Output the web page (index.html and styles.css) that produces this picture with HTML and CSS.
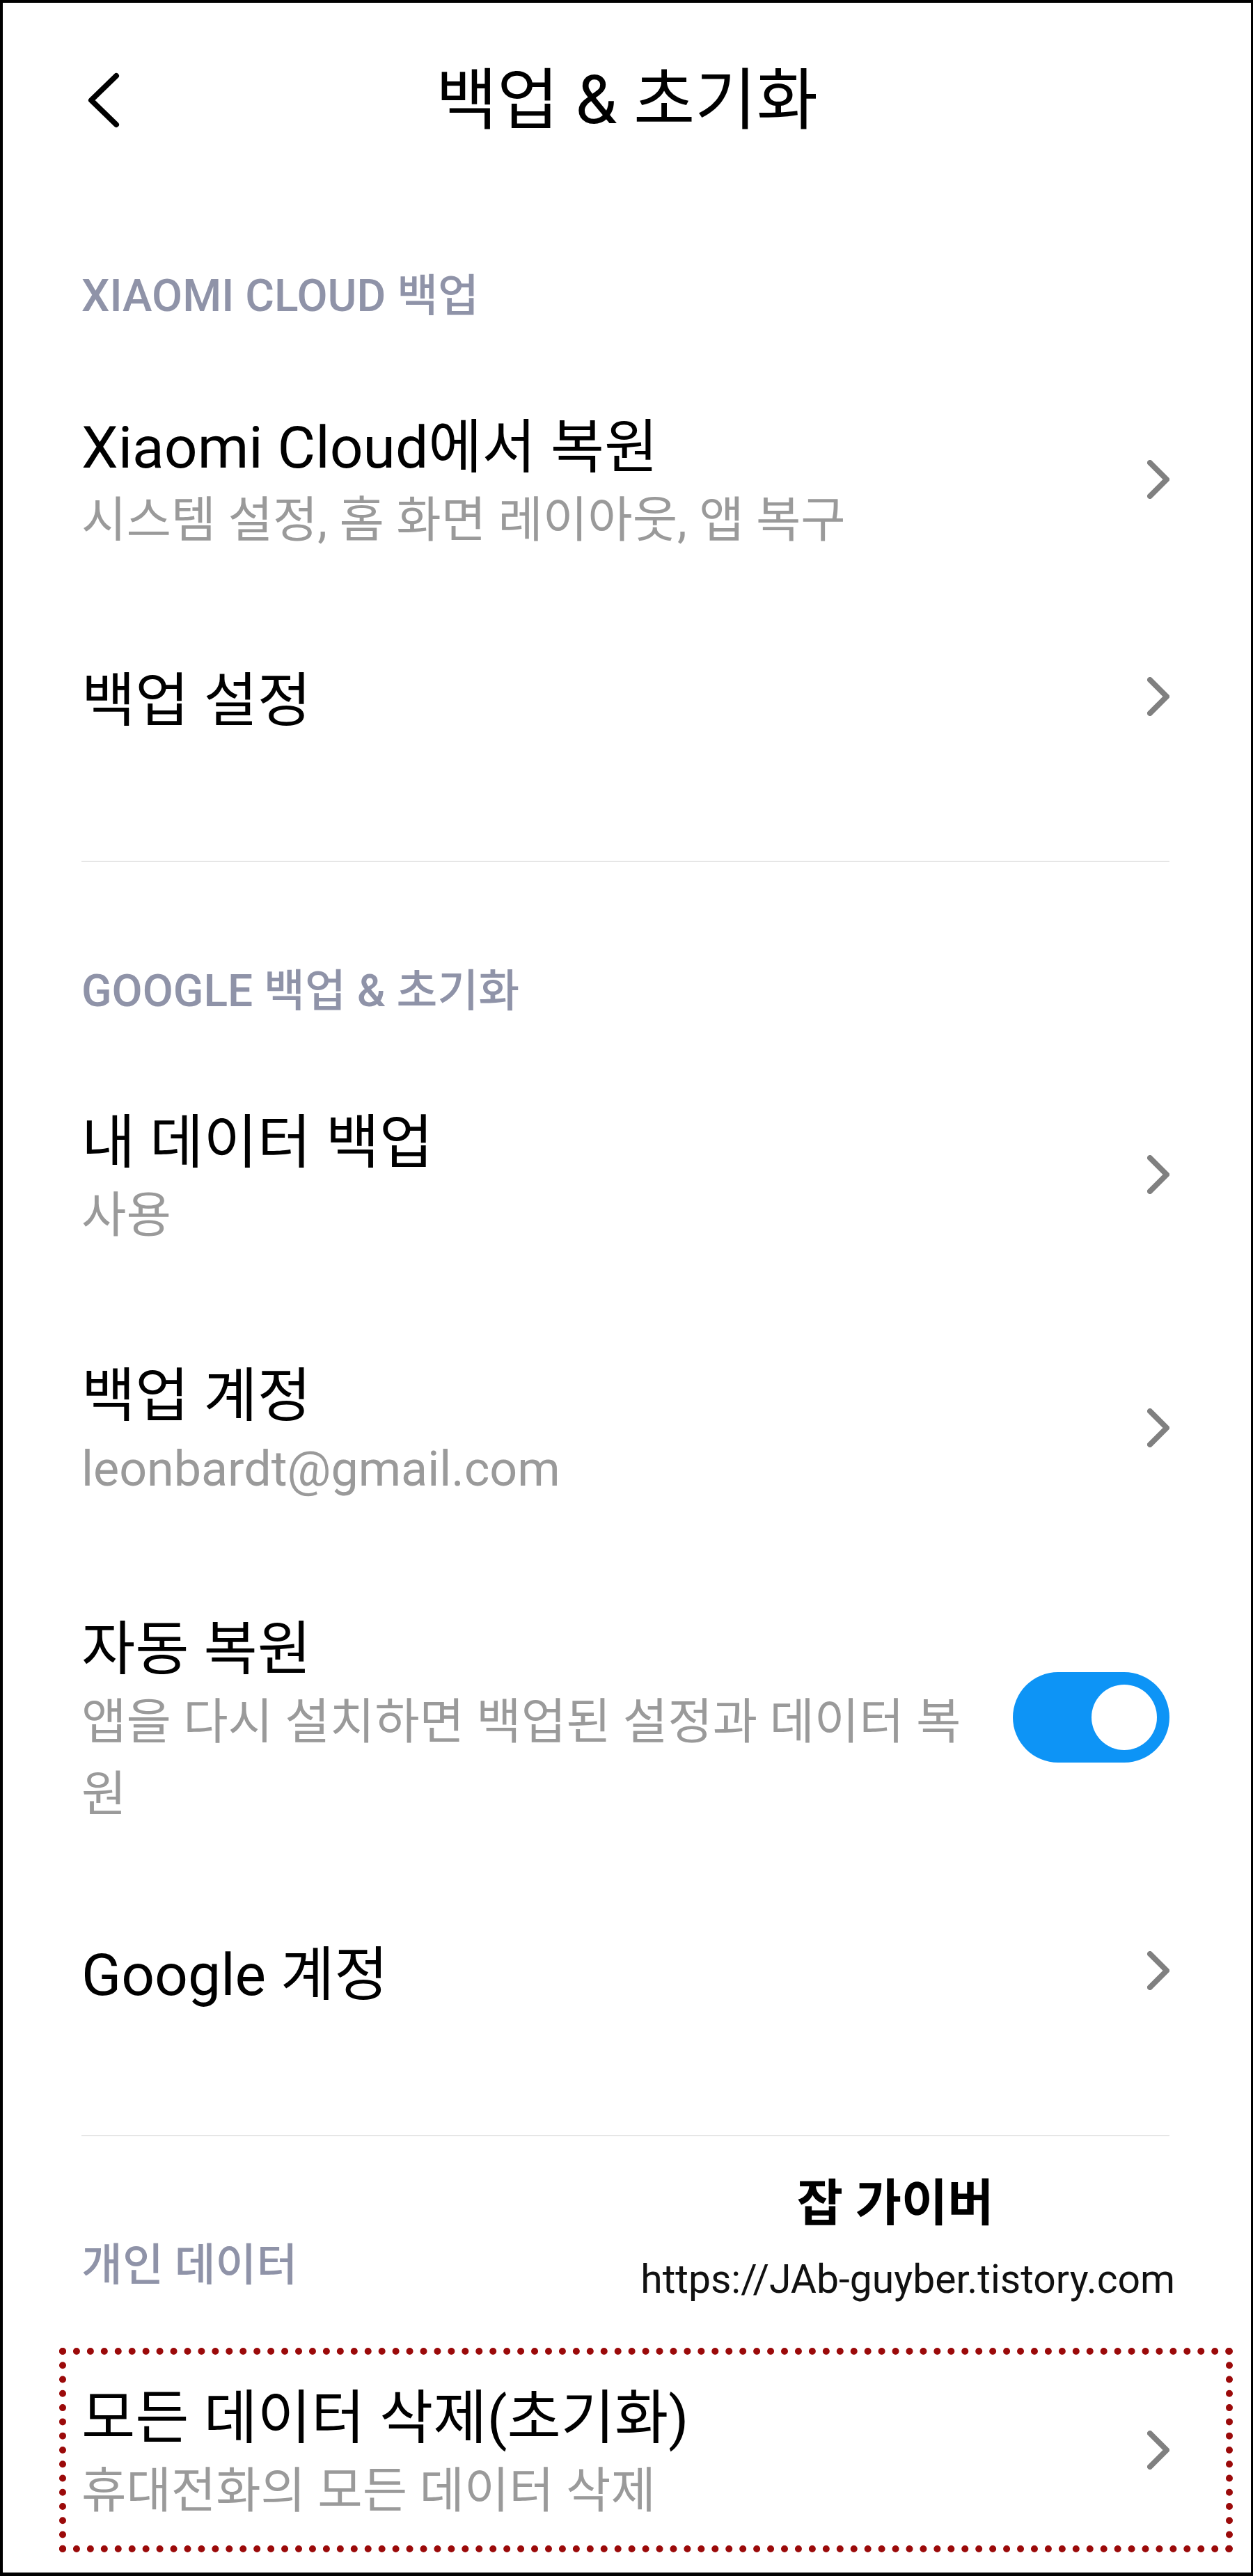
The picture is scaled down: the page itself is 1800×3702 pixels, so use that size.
FILE: index.html
```html
<!DOCTYPE html>
<html lang="ko">
    <head>
        <meta charset="UTF-8">
        <meta name="viewport" content="width=device-width, initial-scale=1.0">
        <title>백업 &amp; 초기화</title>
        <link rel="stylesheet" href="styles.css">
    </head>
    <body>
        <div class="frame">
            <header class="topbar">
                <span class="back">
                    <svg width="50" height="80" viewBox="0 0 50 80">
                        <path d="M43 5 L7 40 L43 75" fill="none" stroke="#000" stroke-width="8" stroke-linecap="round" stroke-linejoin="round"/>
                    </svg>
                </span>
                <h1 class="title">백업 &amp; 초기화</h1>
                <span></span>
            </header>

            <div class="list">
                <div class="section-label">XIAOMI CLOUD 백업</div>

                <div class="item">
                    <div class="item-text">
                        <div class="item-title">Xiaomi Cloud에서 복원</div>
                        <div class="item-sub">시스템 설정, 홈 화면 레이아웃, 앱 복구</div>
                    </div>
                    <svg class="chev" width="32" height="56" viewBox="0 0 32 56">
                        <path d="M4 4 L28 28 L4 52" fill="none" stroke="#808080" stroke-width="8" stroke-linecap="round" stroke-linejoin="round"/>
                    </svg>
                </div>

                <div class="item">
                    <div class="item-text">
                        <div class="item-title">백업 설정</div>
                    </div>
                    <svg class="chev" width="32" height="56" viewBox="0 0 32 56">
                        <path d="M4 4 L28 28 L4 52" fill="none" stroke="#808080" stroke-width="8" stroke-linecap="round" stroke-linejoin="round"/>
                    </svg>
                </div>

                <div class="divider"></div>

                <div class="section-label">GOOGLE 백업 &amp; 초기화</div>

                <div class="item">
                    <div class="item-text">
                        <div class="item-title">내 데이터 백업</div>
                        <div class="item-sub">사용</div>
                    </div>
                    <svg class="chev" width="32" height="56" viewBox="0 0 32 56">
                        <path d="M4 4 L28 28 L4 52" fill="none" stroke="#808080" stroke-width="8" stroke-linecap="round" stroke-linejoin="round"/>
                    </svg>
                </div>

                <div class="item">
                    <div class="item-text">
                        <div class="item-title">백업 계정</div>
                        <div class="item-sub">leonbardt@gmail.com</div>
                    </div>
                    <svg class="chev" width="32" height="56" viewBox="0 0 32 56">
                        <path d="M4 4 L28 28 L4 52" fill="none" stroke="#808080" stroke-width="8" stroke-linecap="round" stroke-linejoin="round"/>
                    </svg>
                </div>

                <div class="item">
                    <div class="item-text">
                        <div class="item-title">자동 복원</div>
                        <div class="item-sub">앱을 다시 설치하면 백업된 설정과 데이터 복원</div>
                    </div>
                    <div class="toggle on"><span class="knob"></span></div>
                </div>

                <div class="item">
                    <div class="item-text">
                        <div class="item-title">Google 계정</div>
                    </div>
                    <svg class="chev" width="32" height="56" viewBox="0 0 32 56">
                        <path d="M4 4 L28 28 L4 52" fill="none" stroke="#808080" stroke-width="8" stroke-linecap="round" stroke-linejoin="round"/>
                    </svg>
                </div>

                <div class="divider"></div>

                <div class="section-label personal">
                    개인 데이터
                    <div class="watermark">
                        <div class="wm-name">잡 가이버</div>
                        <div class="wm-url">https://JAb-guyber.tistory.com</div>
                    </div>
                </div>

                <div class="highlight">
                    <div class="item">
                        <div class="item-text">
                            <div class="item-title">모든 데이터 삭제(초기화)</div>
                            <div class="item-sub">휴대전화의 모든 데이터 삭제</div>
                        </div>
                        <svg class="chev" width="32" height="56" viewBox="0 0 32 56">
                            <path d="M4 4 L28 28 L4 52" fill="none" stroke="#808080" stroke-width="8" stroke-linecap="round" stroke-linejoin="round"/>
                        </svg>
                    </div>
                </div>
            </div>
        </div>
    </body>
</html>
```

FILE: styles.css
```css
body {
    margin: 0;
    background-color: #000;
    font-family: Roboto, "Noto Sans CJK KR", sans-serif;
    color: #000;
}
.frame {
    height: 3693px;
    background-color: #fff;
    border-style: solid;
    border-color: #000;
    border-width: 4px 3px 5px 4px;
    overflow: hidden;
}
.topbar {
    height: 280px;
    display: grid;
    grid-template-columns: 1fr auto 1fr;
    align-items: center;
    margin-bottom: 102px;
}
.back {
    padding-left: 120px;
    display: flex;
    align-items: center;
}
.title {
    margin: 0;
    font-size: 96px;
    font-weight: 400;
    line-height: 1;
}
.list {
    padding: 0 117px 0 113px;
}
.section-label {
    font-size: 64px;
    font-weight: 500;
    line-height: 80px;
    color: #8f93a8;
    margin-bottom: 48px;
}
.item {
    display: flex;
    align-items: center;
    gap: 30px;
    padding: 78px 0;
}
.item-text {
    flex: 1;
    min-width: 0;
}
.item-title {
    font-size: 84px;
    line-height: 104px;
}
.item-sub {
    font-size: 70px;
    line-height: 104px;
    color: #9a9a9a;
}
.chev {
    flex: none;
    margin-bottom: 14px;
}
.toggle {
    flex: none;
    width: 225px;
    height: 130px;
    border-radius: 65px;
    background-color: #0d94f6;
    box-sizing: border-box;
    padding: 18px;
    display: flex;
    justify-content: flex-end;
    margin-bottom: 14px;
}
.knob {
    width: 94px;
    height: 94px;
    border-radius: 50%;
    background-color: #fff;
}
.divider {
    height: 2px;
    background-color: #e6e6e6;
    margin: 99px 0 146px;
}
.personal {
    position: relative;
}
.watermark {
    position: absolute;
    right: -8px;
    top: -94px;
    display: flex;
    flex-direction: column;
    align-items: center;
    color: #000;
    font-weight: 400;
}
.wm-name {
    font-size: 72px;
    font-weight: 700;
    line-height: 90px;
    margin-right: 36px;
}
.wm-url {
    font-size: 57px;
    line-height: 70px;
    margin-top: 29px;
    color: #111;
}
.highlight {
    margin: 78px -91px 0 -32px;
    border: 10px dotted #9b0a0a;
    padding: 40px 81px 26px 22px;
}
.highlight .item {
    padding: 0;
}
```
